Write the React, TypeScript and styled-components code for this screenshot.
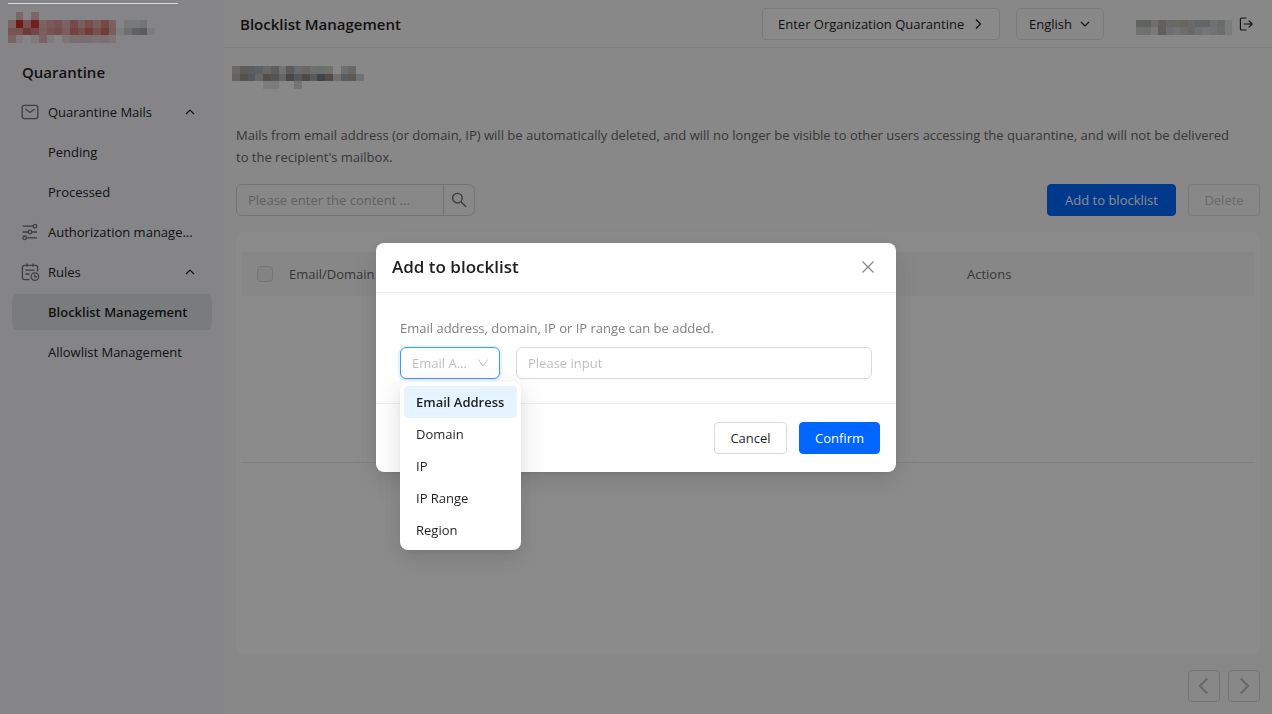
import React from "react";
import styled, { createGlobalStyle, css } from "styled-components";

const GlobalStyle = createGlobalStyle`
  * { box-sizing: border-box; }
  body {
    margin: 0;
    background: #f7f7f7;
    color: #1f1f1f;
    font-family: "Open Sans", "Noto Sans", sans-serif;
    font-size: 13px;
    line-height: 22px;
  }
  button, input, select { font: inherit; color: inherit; }
  h1, h2, p, ul { margin: 0; padding: 0; }
  ul { list-style: none; }
`;

/* ---------- page shell ---------- */

const Page = styled.div`
  display: flex;
  min-height: 100vh;
`;

const Sidebar = styled.aside`
  flex: none;
  width: 224px;
  padding: 12px;
  background: #f2f3f6;
`;

const Brand = styled.div`
  height: 32px;
  margin-left: -4px;
`;

const SidebarTitle = styled.h2`
  margin: 16px 0 10px 10px;
  font-size: 15px;
  line-height: 24px;
  font-weight: 600;
`;

const NavList = styled.ul`
  display: flex;
  flex-direction: column;
  gap: 4px;
  width: 200px;
`;

const navItem = css`
  display: flex;
  align-items: center;
  width: 100%;
  height: 36px;
  padding: 0 16px 0 36px;
  border: 0;
  border-radius: 6px;
  background: none;
  color: #1f1f1f;
  text-align: left;
  text-decoration: none;
  white-space: nowrap;
`;

const NavLink = styled.a<{ $active?: boolean; $icon?: boolean }>`
  ${navItem}
  ${(p) => p.$icon && css`padding-left: 8px;`}
  ${(p) => p.$active && css`background: #dde1e4; font-weight: 600;`}
`;

const NavGroup = styled.button`
  ${navItem}
  padding-left: 8px;
`;

const NavIcon = styled.svg`
  flex: none;
  width: 20px;
  height: 20px;
  margin-right: 8px;
  fill: none;
  stroke: #707275;
  stroke-width: 1.3;
`;

const NavText = styled.span`
  flex: 1;
`;

const LineIcon = styled.svg<{ $size: number }>`
  flex: none;
  width: ${(p) => p.$size}px;
  height: ${(p) => p.$size}px;
  fill: none;
  stroke: currentColor;
`;

const Main = styled.div`
  flex: 1;
  min-width: 0;
  display: flex;
  flex-direction: column;
`;

const TopBar = styled.header`
  display: flex;
  align-items: center;
  height: 48px;
  padding: 0 18px 0 16px;
  border-bottom: 1px solid #e4e4e4;
`;

const PageTitle = styled.h1`
  flex: 1;
  font-size: 15px;
  line-height: 24px;
  font-weight: 600;
`;

const TopButton = styled.button<{ $wide?: boolean }>`
  display: flex;
  align-items: center;
  justify-content: space-between;
  width: ${(p) => (p.$wide ? 238 : 88)}px;
  height: 32px;
  padding: 0 ${(p) => (p.$wide ? 15 : 12)}px;
  margin-left: 16px;
  border: 1px solid #dedede;
  border-radius: ${(p) => (p.$wide ? 4 : 6)}px;
  background: ${(p) => (p.$wide ? "#fcfcfc" : "transparent")};
`;

const Account = styled.div`
  display: flex;
  align-items: center;
  margin-left: 32px;
  gap: 6px;
`;

const IconButton = styled.button`
  display: flex;
  padding: 0;
  border: 0;
  background: none;
`;

const Content = styled.main`
  flex: 1;
  display: flex;
  flex-direction: column;
  padding: 18px 12px 12px;
`;

const MailboxName = styled.div`
  height: 24px;
  margin-left: -4px;
`;

const Intro = styled.p`
  margin: 34px 0 16px;
  padding-right: 20px;
  color: #666;
`;

const Toolbar = styled.div`
  display: flex;
  gap: 12px;
  margin-bottom: 16px;
`;

const Search = styled.form`
  display: flex;
  width: 239px;
  height: 32px;
  margin-right: auto;
  border: 1px solid #d2d2d2;
  border-radius: 6px;
`;

const SearchInput = styled.input`
  flex: 1;
  min-width: 0;
  padding: 0 11px;
  border: 0;
  background: none;
  outline: none;
  &::placeholder { color: #b0b0b0; }
`;

const SearchButton = styled.button`
  display: flex;
  align-items: center;
  justify-content: center;
  width: 31px;
  padding: 0;
  border: 0;
  border-left: 1px solid #d2d2d2;
  background: none;
  color: #6a6a6a;
`;

const Button = styled.button<{ $primary?: boolean; $width: number }>`
  min-width: ${(p) => p.$width}px;
  height: 32px;
  padding: 0 12px;
  border: 1px solid ${(p) => (p.$primary ? "#0066ff" : "#d9d9d9")};
  border-radius: 4px;
  background: ${(p) => (p.$primary ? "#0066ff" : "#fff")};
  color: ${(p) => (p.$primary ? "#fff" : "#1f1f1f")};
  &:disabled {
    border-color: #dcdcdc;
    background: transparent;
    color: #bfbfbf;
  }
`;

const TableCard = styled.section`
  flex: 1;
  padding: 20px 5px;
  border-radius: 8px;
  background: #fdfdfd;
`;

const Table = styled.table`
  width: 100%;
  border-collapse: collapse;
  table-layout: fixed;
  th {
    height: 44px;
    padding: 0;
    background: #f6f6f6;
    color: #666;
    font-weight: 400;
    text-align: left;
  }
  th:first-child {
    width: 48px;
    padding-left: 16px;
  }
  th:last-child { width: 288px; }
  td {
    height: 166px;
    border-bottom: 1px solid #e8e8e8;
  }
`;

const Checkbox = styled.input`
  display: block;
  appearance: none;
  width: 16px;
  height: 16px;
  margin: 0;
  border: 1px solid #d4d4d4;
  border-radius: 4px;
  background: #efefef;
`;

const Pager = styled.nav`
  display: flex;
  justify-content: flex-end;
  gap: 8px;
  margin-top: 16px;
`;

const PagerButton = styled.button`
  display: flex;
  align-items: center;
  justify-content: center;
  width: 32px;
  height: 32px;
  padding: 0;
  border: 1px solid #d2d2d2;
  border-radius: 4px;
  background: transparent;
  color: #bebebe;
`;

/* ---------- dialog ---------- */

const Mask = styled.div`
  position: fixed;
  inset: 0;
  z-index: 10;
  display: flex;
  align-items: center;
  justify-content: center;
  background: rgba(0, 0, 0, 0.45);
`;

const ProgressLine = styled.div`
  position: absolute;
  top: 3px;
  left: 8px;
  width: 170px;
  height: 1px;
  background: #d6d6d6;
`;

const Dialog = styled.div`
  width: 520px;
  border-radius: 8px;
  background: #fff;
  box-shadow: 0 6px 16px rgba(0, 0, 0, 0.08), 0 3px 6px -4px rgba(0, 0, 0, 0.12),
    0 9px 28px 8px rgba(0, 0, 0, 0.05);
`;

const DialogHeader = styled.div`
  display: flex;
  align-items: center;
  justify-content: space-between;
  height: 50px;
  padding: 0 20px 0 16px;
  border-bottom: 1px solid #ececec;
  color: #888;
`;

const DialogTitle = styled.h2`
  color: #1f1f1f;
  font-size: 17px;
  line-height: 24px;
  font-weight: 600;
`;

const DialogBody = styled.div`
  padding: 24px;
`;

const Hint = styled.label`
  display: block;
  margin-bottom: 8px;
  color: #808080;
`;

const Fields = styled.div`
  display: flex;
  gap: 16px;
`;

const TypeField = styled.div`
  position: relative;
  flex: none;
  width: 100px;
`;

const TypeSelect = styled.select`
  display: block;
  appearance: none;
  width: 100%;
  height: 32px;
  padding: 0 30px 0 11px;
  border: 1px solid #4096ff;
  border-radius: 6px;
  background: #fff;
  color: #bfbfbf;
  text-overflow: ellipsis;
  outline: none;
  box-shadow: 0 0 0 2px rgba(5, 145, 255, 0.1);
`;

const SelectArrow = styled.span`
  position: absolute;
  top: 10px;
  right: 11px;
  display: flex;
  color: #bfbfbf;
  pointer-events: none;
`;

const Menu = styled.ul`
  position: absolute;
  top: 35px;
  left: 0;
  width: 121px;
  padding: 4px;
  border-radius: 8px;
  background: #fff;
  box-shadow: 0 6px 16px rgba(0, 0, 0, 0.08), 0 3px 6px -4px rgba(0, 0, 0, 0.12),
    0 9px 28px 8px rgba(0, 0, 0, 0.05);
`;

const MenuItem = styled.li<{ $active?: boolean }>`
  padding: 5px 12px;
  border-radius: 4px;
  white-space: nowrap;
  ${(p) => p.$active && css`background: #e6f4ff; font-weight: 600;`}
`;

const TextInput = styled.input`
  flex: 1;
  min-width: 0;
  height: 32px;
  padding: 0 11px;
  border: 1px solid #d9d9d9;
  border-radius: 6px;
  background: #fff;
  outline: none;
  &::placeholder { color: #bfbfbf; }
`;

const DialogFooter = styled.div`
  display: flex;
  justify-content: flex-end;
  gap: 12px;
  padding: 18px 16px;
  border-top: 1px solid #ececec;
`;

/* ---------- pixelated names ---------- */

const MosaicSvg = styled.svg`
  display: block;
`;

/* Each row lists its cells from left to right; "-" leaves a cell empty. */
const logoCells = [
  "- e0b8ba - e0b8ba",
  "e2b4b7 c8302f dd9092 cf3a3a e0b4b6 dfa0a2 df9698 e4b0b2 d98886 dfaaac d98a88 dfacae d98480 dfb0b2 - dcdee0 dcdee0 d2d4d5",
  "db9a9c db9698 cc6866 d48082 e0aeb0 dc9496 da8a8c dfaaac d27872 db908c cf6e68 db908c cf6e68 dfaaac e6e6e8 c8cacc b0b2b2 a4a6a8 e0e2e4",
  "dcb4b6 e8e0e2 - e8e0e2 dcb4b6 eae2e4 - e6d6d8 e0c8cc e0c8cc e0cace e2d0d4 e0cace e4d8da",
];

const mailboxCells = [
  "c4c0bc a6a6a4 a6aaac aeb2b8 c2beba a8acb0 d0d0d0 a8a8a8 c2c4c8 c0bab6 cacece c6c8c8 ccccca - cacaca bcbcbc -",
  "bab6b2 96948f 9ca2aa bcbcbc 948f8a 9c9c98 b8b8b8 848484 9ca0a8 8e8880 a6a4a0 767c84 988b86 cccccA a2aab6 aaa498 c8d2dc",
  "- - - - e4e2de dee2e2 - - d4d4d4",
];

const accountCells = [
  "-",
  "b0b4b0 b0b2b0 cac8c4 b2b0a8 bfc0bc bfbdb8 bab8b0 bec2c4 b4b8bc b8b8b8 cacece c0c4c4 e0e0e0",
  "cacccc cacccc dcdcda b0aea6 c6cad0 d0d2d8 c8c6c4 c2beb8 cacccf d4d6da cccfd2 c4c8c8 dfe0e2",
];

function Mosaic({ cells, width, height, label }: { cells: string[]; width: number; height: number; label: string }) {
  const rows = cells.map((row) => row.split(" "));
  const cols = Math.max(...rows.map((r) => r.length));
  return (
    <MosaicSvg
      role="img"
      aria-label={label}
      width={width}
      height={height}
      viewBox={`0 0 ${cols} ${rows.length}`}
      preserveAspectRatio="none"
      shapeRendering="crispEdges"
    >
      {rows.map((row, y) =>
        row.map((c, x) => (c === "-" ? null : <rect key={`${x}-${y}`} x={x} y={y} width={1} height={1} fill={`#${c}`} />))
      )}
    </MosaicSvg>
  );
}

const chevronPaths = {
  up: "M2 8 6 4 10 8",
  down: "M2 4 6 8 10 4",
  left: "M8 1.5 3.5 6 8 10.5",
  right: "M4 1.5 8.5 6 4 10.5",
  caret: "M1.2 2.5 6 9 10.8 2.5",
};

function Chevron({ dir, size, weight }: { dir: keyof typeof chevronPaths; size: number; weight: number }) {
  return (
    <LineIcon $size={size} viewBox="0 0 12 12" strokeWidth={weight} aria-hidden="true">
      <path d={chevronPaths[dir]} />
    </LineIcon>
  );
}

const MailIcon = () => (
  <NavIcon viewBox="0 0 20 20">
    <rect x="2.2" y="3.4" width="15.6" height="13.2" rx="2" />
    <path d="M5.4 7 10 10.4 14.6 7" />
  </NavIcon>
);

const SlidersIcon = () => (
  <NavIcon viewBox="0 0 20 20">
    <path d="M2.6 4.2h10.2M2.6 10h5.4M11.8 10h5.2M6.6 15.8h10.4" />
    <circle cx="14.9" cy="4.2" r="1.8" />
    <circle cx="9.9" cy="10" r="1.8" />
    <circle cx="4.7" cy="15.8" r="1.8" />
  </NavIcon>
);

const RulesIcon = () => (
  <NavIcon viewBox="0 0 20 20">
    <path d="M9.6 17.6H4.4a2 2 0 0 1-2-2V5.4a2 2 0 0 1 2-2h11.2a2 2 0 0 1 2 2v4.2M7 1.6v3.2M13 1.6v3.2M5.4 8.2h9.2M5.4 12h4.2" />
    <circle cx="14.9" cy="14.6" r="3.8" />
    <path d="M14.8 12.4v2.4h2.2" />
  </NavIcon>
);

const options = ["Email Address", "Domain", "IP", "IP Range", "Region"];

export default function App() {
  return (
    <>
      <GlobalStyle />
      <Page>
        <Sidebar>
          <Brand>
            <Mosaic cells={logoCells} width={147} height={31} label="Logo" />
          </Brand>
          <SidebarTitle>Quarantine</SidebarTitle>
          <nav>
            <NavList>
              <li>
                <NavGroup type="button">
                  <MailIcon />
                  <NavText>Quarantine Mails</NavText>
                  <Chevron dir="up" size={12} weight={1.2} />
                </NavGroup>
              </li>
              <li><NavLink href="#pending">Pending</NavLink></li>
              <li><NavLink href="#processed">Processed</NavLink></li>
              <li>
                <NavLink href="#authorization" $icon>
                  <SlidersIcon />
                  <NavText>Authorization manage...</NavText>
                </NavLink>
              </li>
              <li>
                <NavGroup type="button">
                  <RulesIcon />
                  <NavText>Rules</NavText>
                  <Chevron dir="up" size={12} weight={1.2} />
                </NavGroup>
              </li>
              <li><NavLink href="#blocklist" $active>Blocklist Management</NavLink></li>
              <li><NavLink href="#allowlist">Allowlist Management</NavLink></li>
            </NavList>
          </nav>
        </Sidebar>

        <Main>
          <TopBar>
            <PageTitle>Blocklist Management</PageTitle>
            <TopButton type="button" $wide>
              Enter Organization Quarantine
              <Chevron dir="right" size={12} weight={1.2} />
            </TopButton>
            <TopButton type="button">
              English
              <Chevron dir="down" size={12} weight={1.2} />
            </TopButton>
            <Account>
              <Mosaic cells={accountCells} width={96} height={23} label="Account" />
              <IconButton type="button" aria-label="Log out">
                <LineIcon $size={16} viewBox="0 0 16 16" strokeWidth={1.2}>
                  <path d="M8.4 2H4a1.6 1.6 0 0 0-1.6 1.6v8.8A1.6 1.6 0 0 0 4 14h4.4M5.8 8h8M10.8 4.6 14.2 8l-3.4 3.4" />
                </LineIcon>
              </IconButton>
            </Account>
          </TopBar>

          <Content>
            <MailboxName>
              <Mosaic cells={mailboxCells} width={132} height={23} label="Mailbox" />
            </MailboxName>
            <Intro>
              Mails from email address (or domain, IP) will be automatically deleted, and will no longer be visible to
              other users accessing the quarantine, and will not be delivered to the recipient's mailbox.
            </Intro>
            <Toolbar>
              <Search>
                <SearchInput aria-label="Search content" placeholder="Please enter the content ..." />
                <SearchButton type="button" aria-label="Search">
                  <LineIcon $size={16} viewBox="0 0 16 16" strokeWidth={1.4}>
                    <circle cx="6.4" cy="6.2" r="4.8" />
                    <path d="M9.9 9.8 15 14.8" />
                  </LineIcon>
                </SearchButton>
              </Search>
              <Button type="button" $primary $width={129}>Add to blocklist</Button>
              <Button type="button" $width={72} disabled>Delete</Button>
            </Toolbar>
            <TableCard>
              <Table>
                <thead>
                  <tr>
                    <th><Checkbox type="checkbox" aria-label="Select all" disabled /></th>
                    <th>Email/Domain</th>
                    <th>Actions</th>
                  </tr>
                </thead>
                <tbody>
                  <tr><td colSpan={3} /></tr>
                </tbody>
              </Table>
            </TableCard>
            <Pager aria-label="Pagination">
              <PagerButton type="button" aria-label="Previous page">
                <Chevron dir="left" size={20} weight={1.2} />
              </PagerButton>
              <PagerButton type="button" aria-label="Next page">
                <Chevron dir="right" size={20} weight={1.2} />
              </PagerButton>
            </Pager>
          </Content>
        </Main>
      </Page>

      <Mask>
        <ProgressLine />
        <Dialog role="dialog" aria-modal="true" aria-labelledby="dialog-title">
          <DialogHeader>
            <DialogTitle id="dialog-title">Add to blocklist</DialogTitle>
            <IconButton type="button" aria-label="Close">
              <LineIcon $size={16} viewBox="0 0 16 16" strokeWidth={1.3} color="#888">
                <path d="M2.5 2.5 13.5 13.5M13.5 2.5 2.5 13.5" />
              </LineIcon>
            </IconButton>
          </DialogHeader>
          <DialogBody>
            <Hint htmlFor="entry-type">Email address, domain, IP or IP range can be added.</Hint>
            <Fields>
              <TypeField>
                <TypeSelect id="entry-type" defaultValue="Email Address">
                  {options.map((o) => <option key={o}>{o}</option>)}
                </TypeSelect>
                <SelectArrow><Chevron dir="caret" size={12} weight={1} /></SelectArrow>
                <Menu role="listbox" aria-label="Entry type">
                  {options.map((o, i) => (
                    <MenuItem key={o} role="option" aria-selected={i === 0} $active={i === 0}>{o}</MenuItem>
                  ))}
                </Menu>
              </TypeField>
              <TextInput aria-label="Value" placeholder="Please input" />
            </Fields>
          </DialogBody>
          <DialogFooter>
            <Button type="button" $width={73}>Cancel</Button>
            <Button type="button" $primary $width={81}>Confirm</Button>
          </DialogFooter>
        </Dialog>
      </Mask>
    </>
  );
}
